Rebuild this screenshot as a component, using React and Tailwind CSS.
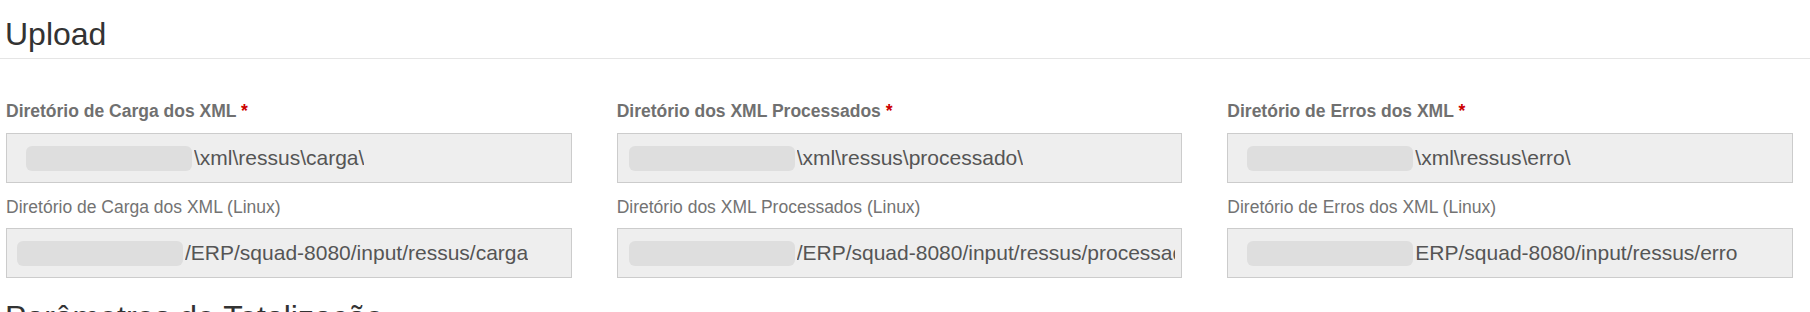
import React from 'react';

const fields = [
  {
    label: 'Diretório de Carga dos XML',
    value: '\\xml\\ressus\\carga\\',
    pad: 'pl-[19px]',
    linuxLabel: 'Diretório de Carga dos XML (Linux)',
    linuxValue: '/ERP/squad-8080/input/ressus/carga',
    linuxPad: 'pl-[10px]',
  },
  {
    label: 'Diretório dos XML Processados',
    value: '\\xml\\ressus\\processado\\',
    pad: 'pl-[11px]',
    linuxLabel: 'Diretório dos XML Processados (Linux)',
    linuxValue: '/ERP/squad-8080/input/ressus/processado',
    linuxPad: 'pl-[11px]',
  },
  {
    label: 'Diretório de Erros dos XML',
    value: '\\xml\\ressus\\erro\\',
    pad: 'pl-[19px]',
    linuxLabel: 'Diretório de Erros dos XML (Linux)',
    linuxValue: 'ERP/squad-8080/input/ressus/erro',
    linuxPad: 'pl-[19px]',
  },
];

const PathInput = ({ value, pad }) => (
  <div className={`flex items-center h-[50px] border border-[#cccccc] bg-[#eeeeee] pr-[6px] overflow-hidden ${pad}`}>
    {/* prefix of the path is blurred out in the screenshot */}
    <div className="w-[166px] h-[25px] shrink-0 rounded-md bg-[#dedede]" />
    <span className="ml-[2px] text-[21px] text-[#555555] whitespace-nowrap overflow-hidden">{value}</span>
  </div>
);

const App = () => {
  return (
    <div className="w-[1810px] h-[312px] overflow-hidden bg-white font-['Liberation_Sans',Arial,sans-serif]">
      <div className="border-b border-[#e5e5e5] pl-[5px] pt-[16px] pb-[6px]">
        <h3 className="text-[32px] leading-[36px] text-[#333333]">Upload</h3>
      </div>

      <div className="grid grid-cols-3 gap-x-[45px] pl-[6px] pr-[17px] mt-[40px]">
        {fields.map((f) => (
          <div key={f.label}>
            <div className="h-[25px] leading-[25px] text-[17.5px] font-bold text-[#707070] mb-[9px]">
              {f.label} <span className="text-[#cc0000]">*</span>
            </div>
            <PathInput value={f.value} pad={f.pad} />
            <div className="h-[25px] leading-[25px] text-[17.5px] text-[#737373] mt-[12px] mb-[8px]">
              {f.linuxLabel}
            </div>
            <PathInput value={f.linuxValue} pad={f.linuxPad} />
          </div>
        ))}
      </div>

      <div className="pl-[5px] mt-[21px]">
        <h3 className="text-[32px] leading-[36px] text-[#333333]">Parâmetros de Totalização</h3>
      </div>
    </div>
  );
};

export default App;
